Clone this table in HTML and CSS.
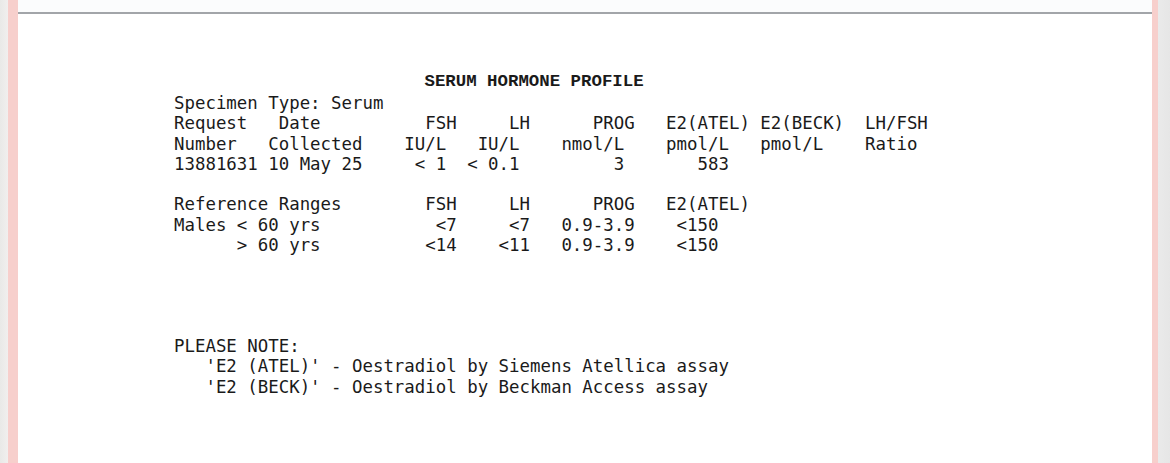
FILE: index.html
```html
<!DOCTYPE html>
<html>
<head>
<meta charset="utf-8">
<link rel="stylesheet" href="styles.css">
</head>
<body>
<div class="frame">
  <div class="edge edge-left"></div>
  <div class="band band-left"></div>
  <div class="paper">
    <div class="paper-top"></div>
    <div class="report">
<pre class="title">                        SERUM HORMONE PROFILE</pre>
<pre class="body">Specimen Type: Serum
Request   Date          FSH     LH      PROG   E2(ATEL) E2(BECK)  LH/FSH
Number   Collected    IU/L   IU/L    nmol/L    pmol/L   pmol/L    Ratio
13881631 10 May 25     &lt; 1  &lt; 0.1         3       583

Reference Ranges        FSH     LH      PROG   E2(ATEL)
Males &lt; 60 yrs           &lt;7     &lt;7   0.9-3.9    &lt;150
      &gt; 60 yrs          &lt;14    &lt;11   0.9-3.9    &lt;150




PLEASE NOTE:
   'E2 (ATEL)' - Oestradiol by Siemens Atellica assay
   'E2 (BECK)' - Oestradiol by Beckman Access assay</pre>
    </div>
  </div>
  <div class="band band-right"></div>
  <div class="edge edge-right"></div>
</div>
</body>
</html>
```
FILE: styles.css
```css
html, body {
  margin: 0;
  padding: 0;
  background: #ffffff;
}
.frame {
  display: flex;
  width: 1170px;
  height: 463px;
  overflow: hidden;
}
.edge-left {
  width: 8px;
  background: linear-gradient(to right, #e9e9e7, #f1efee);
}
.band-left {
  width: 10px;
  background: #f7cfcc;
}
.band-right {
  width: 6px;
  background: #f7cfcc;
}
.edge-right {
  width: 12px;
  background: linear-gradient(to right, #eaeaea, #e6e6e6);
}
.paper {
  flex: 1;
  display: flex;
  flex-direction: column;
  background: #ffffff;
}
.paper-top {
  height: 12px;
  background: #fbfcfd;
  border-bottom: 2px solid #a2a5a9;
}
.report {
  padding-left: 156px;
  padding-top: 57px;
}
.report pre {
  margin: 0;
  color: #1a1a1a;
}
.title {
  font-family: "Liberation Mono", "Courier New", monospace;
  font-weight: bold;
  font-size: 17.4px;
  line-height: 22px;
}
.body {
  font-family: "DejaVu Sans Mono", monospace;
  font-size: 17.4px;
  line-height: 20.25px;
}
```
